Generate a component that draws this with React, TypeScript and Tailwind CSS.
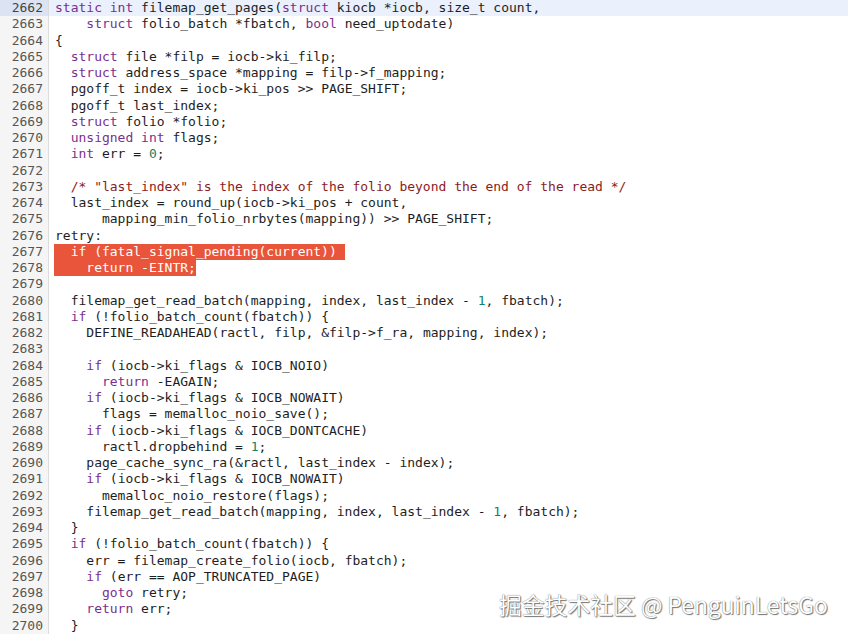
const START = 2662;

const lines: string[] = [
  "static int filemap_get_pages(struct kiocb *iocb, size_t count,",
  "    struct folio_batch *fbatch, bool need_uptodate)",
  "{",
  "  struct file *filp = iocb->ki_filp;",
  "  struct address_space *mapping = filp->f_mapping;",
  "  pgoff_t index = iocb->ki_pos >> PAGE_SHIFT;",
  "  pgoff_t last_index;",
  "  struct folio *folio;",
  "  unsigned int flags;",
  "  int err = 0;",
  "",
  "  /* \"last_index\" is the index of the folio beyond the end of the read */",
  "  last_index = round_up(iocb->ki_pos + count,",
  "      mapping_min_folio_nrbytes(mapping)) >> PAGE_SHIFT;",
  "retry:",
  "  if (fatal_signal_pending(current))",
  "    return -EINTR;",
  "",
  "  filemap_get_read_batch(mapping, index, last_index - 1, fbatch);",
  "  if (!folio_batch_count(fbatch)) {",
  "    DEFINE_READAHEAD(ractl, filp, &filp->f_ra, mapping, index);",
  "",
  "    if (iocb->ki_flags & IOCB_NOIO)",
  "      return -EAGAIN;",
  "    if (iocb->ki_flags & IOCB_NOWAIT)",
  "      flags = memalloc_noio_save();",
  "    if (iocb->ki_flags & IOCB_DONTCACHE)",
  "      ractl.dropbehind = 1;",
  "    page_cache_sync_ra(&ractl, last_index - index);",
  "    if (iocb->ki_flags & IOCB_NOWAIT)",
  "      memalloc_noio_restore(flags);",
  "    filemap_get_read_batch(mapping, index, last_index - 1, fbatch);",
  "  }",
  "  if (!folio_batch_count(fbatch)) {",
  "    err = filemap_create_folio(iocb, fbatch);",
  "    if (err == AOP_TRUNCATED_PAGE)",
  "      goto retry;",
  "    return err;",
  "  }",
];

const KEYWORDS = new Set(["static", "int", "struct", "bool", "unsigned", "if", "return", "goto"]);

function Code({ text }: { text: string }) {
  const c = text.indexOf("/*");
  if (c >= 0) {
    return (
      <>
        {text.slice(0, c)}
        <span className="text-[#8b1c1c]">{text.slice(c)}</span>
      </>
    );
  }
  const parts = text.split(/(\b[A-Za-z_][A-Za-z0-9_]*\b|\b\d+\b)/);
  return (
    <>
      {parts.map((p, i) => {
        if (KEYWORDS.has(p)) return <span key={i} className="text-[#7a2f8e]">{p}</span>;
        if (/^\d+$/.test(p)) return <span key={i} className="text-[#14806a]">{p}</span>;
        return <span key={i}>{p}</span>;
      })}
    </>
  );
}

function Selected({ text, extra }: { text: string; extra: boolean }) {
  return (
    <span className="inline-block h-[16.25px] bg-[#e8553a] text-white -ml-px pl-px">
      {text}
      {extra ? " " : ""}
    </span>
  );
}

export default function App() {
  return (
    <div className="relative w-[848px] h-[637px] overflow-hidden bg-white font-['DejaVu_Sans_Mono',monospace] text-[13px] text-[#1e1e1e]">
      <div className="flex flex-col">
        {lines.map((text, i) => {
          const n = START + i;
          const current = i === 0;
          return (
            <div key={n} className={`flex h-[16.25px] leading-[16.25px] ${current ? "bg-[#eaf0fc]" : ""}`}>
              <div
                className={`w-[49px] shrink-0 pr-[5px] text-right border-r border-[#dcdcdc] ${
                  current ? "bg-[#dce4f4] text-[#444]" : "bg-[#f5f5f5] text-[#555]"
                }`}
              >
                {n}
              </div>
              <div className="pl-[6px] whitespace-pre">
                {n === 2677 ? (
                  <Selected text={text} extra />
                ) : n === 2678 ? (
                  <Selected text={text} extra={false} />
                ) : (
                  <Code text={text} />
                )}
              </div>
            </div>
          );
        })}
      </div>
      <div className="absolute left-[499px] top-[589px] font-['Noto_Sans_CJK_SC','Noto_Sans',sans-serif] text-[22.8px] leading-[32px] text-white [text-shadow:0_0_1px_#555,1px_1px_1px_#777]">
        掘金技术社区 @ PenguinLetsGo
      </div>
    </div>
  );
}
